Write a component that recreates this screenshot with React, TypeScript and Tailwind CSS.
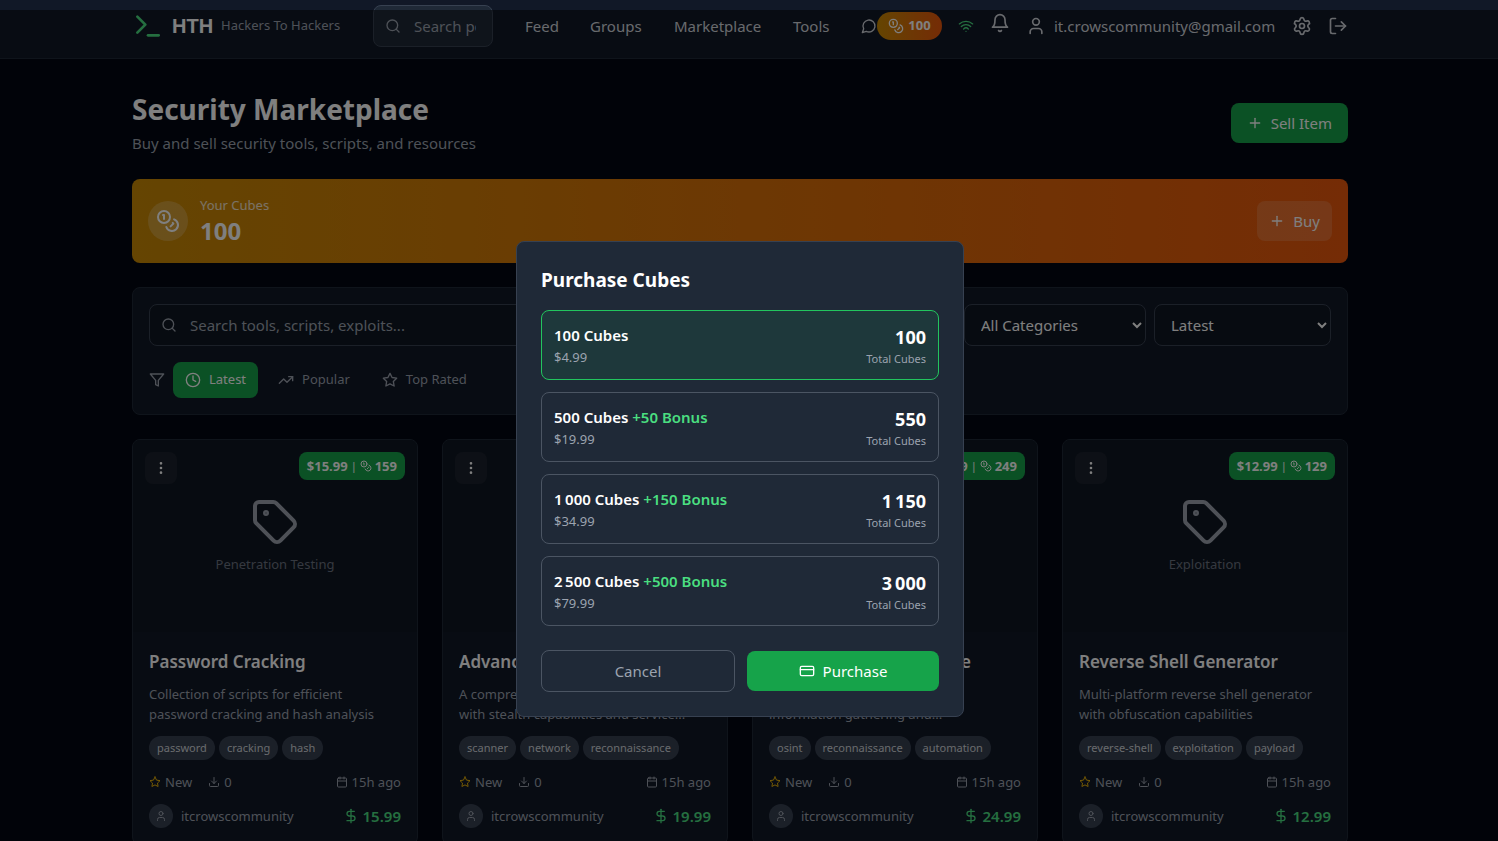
import React, { useState } from "react";
import {
  Calendar,
  Clock,
  Coins,
  CreditCard,
  DollarSign,
  Download,
  EllipsisVertical,
  LogOut,
  Plus,
  Search,
  Settings,
  Tag,
  TrendingUp,
  User,
  Wifi,
} from "lucide-react";

type IconProps = { className?: string };

function Glyph({ className, children }: IconProps & { children: React.ReactNode }) {
  return (
    <svg
      viewBox="0 0 24 24"
      fill="none"
      stroke="currentColor"
      strokeWidth="2"
      strokeLinecap="round"
      strokeLinejoin="round"
      aria-hidden="true"
      className={className}
    >
      {children}
    </svg>
  );
}

const TerminalIcon = ({ className }: IconProps) => (
  <Glyph className={className}>
    <polyline points="4 17 10 11 4 5" />
    <line x1="12" x2="20" y1="19" y2="19" />
  </Glyph>
);

const MessageIcon = ({ className }: IconProps) => (
  <Glyph className={className}>
    <path d="M7.9 20A9 9 0 1 0 4 16.1L2 22Z" />
  </Glyph>
);

const BellIcon = ({ className }: IconProps) => (
  <Glyph className={className}>
    <path d="M6 8a6 6 0 0 1 12 0c0 7 3 9 3 9H3s3-2 3-9" />
    <path d="M10.3 21a1.94 1.94 0 0 0 3.4 0" />
  </Glyph>
);

const FilterIcon = ({ className }: IconProps) => (
  <Glyph className={className}>
    <polygon points="22 3 2 3 10 12.46 10 19 14 21 14 12.46 22 3" />
  </Glyph>
);

const StarIcon = ({ className }: IconProps) => (
  <Glyph className={className}>
    <polygon points="12 2 15.09 8.26 22 9.27 17 14.14 18.18 21.02 12 17.77 5.82 21.02 7 14.14 2 9.27 8.91 8.26 12 2" />
  </Glyph>
);

type Product = {
  title: string;
  category: string;
  description: string;
  tags: string[];
  price: string;
  cubes: number;
};

const products: Product[] = [
  {
    title: "Password Cracking",
    category: "Penetration Testing",
    description: "Collection of scripts for efficient\npassword cracking and hash analysis",
    tags: ["password", "cracking", "hash"],
    price: "15.99",
    cubes: 159,
  },
  {
    title: "Advanced Port Scanner",
    category: "Network Security",
    description: "A comprehensive network scanner\nwith stealth capabilities and service...",
    tags: ["scanner", "network", "reconnaissance"],
    price: "19.99",
    cubes: 199,
  },
  {
    title: "OSINT Automation Suite",
    category: "Reconnaissance",
    description: "Automated toolkit for OSINT\ninformation gathering and...",
    tags: ["osint", "reconnaissance", "automation"],
    price: "24.99",
    cubes: 249,
  },
  {
    title: "Reverse Shell Generator",
    category: "Exploitation",
    description: "Multi-platform reverse shell generator\nwith obfuscation capabilities",
    tags: ["reverse-shell", "exploitation", "payload"],
    price: "12.99",
    cubes: 129,
  },
];

const packs = [
  { amount: "100", bonus: "", price: "$4.99", total: "100" },
  { amount: "500", bonus: "+50 Bonus", price: "$19.99", total: "550" },
  { amount: "1\u202f000", bonus: "+150 Bonus", price: "$34.99", total: "1\u202f150" },
  { amount: "2\u202f500", bonus: "+500 Bonus", price: "$79.99", total: "3\u202f000" },
];

function Header() {
  return (
    <header className="border-b border-[#1f2937] bg-[#111827] pt-[5px] pr-[18px] pb-[11px] text-[15px] text-[#d1d5db]">
      <div className="mx-auto flex max-w-7xl items-center justify-between px-8">
        <div className="flex items-center gap-8">
          <a href="#home" className="flex w-[209px] items-center gap-2 whitespace-nowrap">
            <TerminalIcon className="size-8 shrink-0 text-[#4ade80]" />
            <span className="font-['Liberation_Sans',sans-serif] text-xl font-bold text-white">HTH</span>
            <span className="text-[13px] text-[#9ca3af]">Hackers To Hackers</span>
          </a>
          <div className="relative w-[120px]">
            <Search className="absolute top-[13px] left-3 size-4 text-[#9ca3af]" />
            <input
              type="text"
              aria-label="Search posts"
              placeholder="Search posts, groups"
              className="h-[42px] w-full rounded-lg border border-[#374151] bg-[#1f2937] pr-4 pl-10 text-white placeholder-[#9ca3af]"
            />
          </div>
          <nav className="flex gap-8 whitespace-nowrap">
            <a href="#feed" className="w-[33px]">Feed</a>
            <a href="#groups" className="w-[52px]">Groups</a>
            <a href="#marketplace" className="w-[87px]">Marketplace</a>
            <a href="#tools" className="w-9">Tools</a>
          </nav>
        </div>
        <div className="flex items-center gap-4">
          <div className="flex items-center">
            <button type="button" aria-label="Messages">
              <MessageIcon className="size-4" />
            </button>
            <button
              type="button"
              className="flex h-7 w-[65px] items-center justify-center gap-1 rounded-full bg-linear-to-r/srgb from-[#ca8a04] to-[#ea580c] text-[13px] font-bold text-white"
            >
              <Coins className="size-4" />
              100
            </button>
          </div>
          <Wifi className="size-4 text-[#4ade80]" />
          <button type="button" aria-label="Notifications" className="pb-[6px]">
            <BellIcon className="size-5" />
          </button>
          <a href="#profile" className="flex w-[250px] items-center gap-2">
            <User className="size-5 shrink-0" />
            it.crowscommunity@gmail.com
          </a>
          <button type="button" aria-label="Settings">
            <Settings className="size-5" />
          </button>
          <button type="button" aria-label="Log out">
            <LogOut className="size-5" />
          </button>
        </div>
      </div>
    </header>
  );
}

function Filters() {
  return (
    <section className="rounded-lg border border-[#1f2937] bg-[#111827] p-4">
      <div className="flex gap-2">
        <div className="relative flex-1">
          <Search className="absolute top-[13px] left-3 size-4 text-[#9ca3af]" />
          <input
            type="text"
            aria-label="Search tools"
            placeholder="Search tools, scripts, exploits..."
            className="h-[42px] w-full rounded-lg border border-[#374151] bg-[#0f1722] pr-4 pl-10 text-white placeholder-[#9ca3af]"
          />
        </div>
        <select
          aria-label="Category"
          className="h-[42px] w-[182px] rounded-lg border border-[#374151] bg-[#0f1722] px-3 text-white"
        >
          <option>All Categories</option>
        </select>
        <select
          aria-label="Sort order"
          className="h-[42px] w-[177px] rounded-lg border border-[#374151] bg-[#0f1722] px-3 text-white"
        >
          <option>Latest</option>
        </select>
      </div>
      <div className="mt-4 flex items-center gap-2 text-[13px] text-[#9ca3af]">
        <FilterIcon className="size-4" />
        <button type="button" className="flex h-9 items-center gap-2 rounded-lg bg-[#16a34a] px-3 text-white">
          <Clock className="size-4" />
          Latest
        </button>
        <button type="button" className="flex h-9 items-center gap-2 rounded-lg px-3">
          <TrendingUp className="size-4" />
          Popular
        </button>
        <button type="button" className="flex h-9 items-center gap-2 rounded-lg px-3">
          <StarIcon className="size-4" />
          Top Rated
        </button>
      </div>
    </section>
  );
}

function ProductCard({ product }: { product: Product }) {
  return (
    <article className="min-w-0 overflow-hidden rounded-lg border border-[#1f2937] bg-[#111827] text-[13px] leading-5 text-[#9ca3af]">
      <div className="relative flex h-48 flex-col items-center justify-center gap-2 bg-[#0f1722]">
        <Tag className="size-12" />
        <span className="text-[#6b7280]">{product.category}</span>
        <button
          type="button"
          aria-label="Item options"
          className="absolute top-3 left-3 flex size-8 items-center justify-center rounded-lg bg-[#1b212d] text-white"
        >
          <EllipsisVertical className="size-4" />
        </button>
        <div className="absolute top-3 right-3 flex h-7 items-center gap-[3px] rounded-lg bg-[#16a34a] px-2 font-bold whitespace-nowrap text-white">
          <span>${product.price}</span>
          <span className="text-[11px] font-normal">|</span>
          <Coins className="size-3" />
          <span>{product.cubes}</span>
        </div>
      </div>
      <div className="p-4">
        <h2 className="truncate text-[17px] leading-7 font-semibold text-white">{product.title}</h2>
        <p className="mt-2 whitespace-pre-line">{product.description}</p>
        <ul className="mt-3 flex gap-1 text-[11px] leading-4 text-[#d1d5db]">
          {product.tags.map((tag) => (
            <li key={tag} className="rounded-full bg-[#374151] px-2 py-1 whitespace-nowrap">
              {tag}
            </li>
          ))}
        </ul>
        <div className="mt-3 flex items-center gap-4">
          <span className="flex items-center gap-1">
            <StarIcon className="size-3 text-[#eab308]" />
            New
          </span>
          <span className="flex items-center gap-1">
            <Download className="size-3" />0
          </span>
          <span className="ml-auto flex items-center gap-1">
            <Calendar className="size-3" />
            15h ago
          </span>
        </div>
        <div className="mt-3 flex items-center gap-2">
          <span className="flex size-6 items-center justify-center rounded-full bg-[#374151]">
            <User className="size-3" />
          </span>
          <span>itcrowscommunity</span>
          <span className="ml-auto flex items-center gap-1 text-[15px] font-semibold text-[#4ade80]">
            <DollarSign className="size-4" />
            {product.price}
          </span>
        </div>
      </div>
    </article>
  );
}

function PurchaseDialog() {
  const [selected, setSelected] = useState(0);
  return (
    <div className="fixed inset-x-0 top-[10px] bottom-0 flex items-center justify-center bg-black/50 pt-[107px] pr-[18px]">
      <div
        role="dialog"
        aria-modal="true"
        aria-labelledby="purchase-title"
        className="w-full max-w-md rounded-lg border border-[#374151] bg-[#1f2937] p-6"
      >
        <h2 id="purchase-title" className="text-[19px] leading-7 font-bold text-white">
          Purchase Cubes
        </h2>
        <div className="mt-4 flex flex-col gap-3">
          {packs.map((pack, index) => (
            <button
              key={pack.total}
              type="button"
              aria-pressed={selected === index}
              onClick={() => setSelected(index)}
              className={
                selected === index
                  ? "flex items-center justify-between rounded-lg border border-[#22c55e] bg-[#22c55e]/10 p-3"
                  : "flex items-center justify-between rounded-lg border border-[#4b5563] p-3"
              }
            >
              <span className="flex flex-col text-left">
                <span className="leading-6 font-semibold text-white">
                  {pack.amount} Cubes{" "}
                  {pack.bonus && <span className="text-[#4ade80]">{pack.bonus}</span>}
                </span>
                <span className="text-[13px] leading-5 text-[#9ca3af]">{pack.price}</span>
              </span>
              <span className="flex flex-col text-right">
                <span className="text-lg leading-7 font-bold text-white">{pack.total}</span>
                <span className="text-[11px] leading-4 text-[#9ca3af]">Total Cubes</span>
              </span>
            </button>
          ))}
        </div>
        <div className="mt-6 flex items-center gap-3">
          <button
            type="button"
            className="flex-1 rounded-lg border border-[#4b5563] px-4 py-2 leading-6 text-[#9ca3af]"
          >
            Cancel
          </button>
          <button
            type="button"
            className="flex flex-1 items-center justify-center gap-2 rounded-lg bg-[#16a34a] px-4 py-2 leading-6 text-white"
          >
            <CreditCard className="size-4" />
            Purchase
          </button>
        </div>
      </div>
    </div>
  );
}

export default function App() {
  return (
    <div className="min-h-screen bg-[#030712] font-['Noto_Sans',sans-serif] text-[15px]">
      <Header />
      <div className="pr-[18px]">
        <main className="mx-auto flex max-w-7xl flex-col gap-6 p-8">
          <div className="flex items-center justify-between">
            <div>
              <h1 className="text-[28px] leading-9 font-bold text-white">Security Marketplace</h1>
              <p className="mt-1 leading-6 text-[#9ca3af]">
                Buy and sell security tools, scripts, and resources
              </p>
            </div>
            <button
              type="button"
              className="flex h-10 items-center gap-2 rounded-lg bg-[#16a34a] px-4 text-white"
            >
              <Plus className="size-4" />
              Sell Item
            </button>
          </div>

          <section className="flex items-center justify-between rounded-lg bg-linear-to-r/srgb from-[#ca8a04] to-[#ea580c] p-4 text-white">
            <div className="flex items-center gap-3">
              <span className="flex size-10 items-center justify-center rounded-full bg-white/20">
                <Coins className="size-6" />
              </span>
              <div>
                <p className="text-[13px] leading-5 text-white/80">Your Cubes</p>
                <p className="text-2xl leading-8 font-bold">100</p>
              </div>
            </div>
            <button type="button" className="flex h-10 items-center gap-2 rounded-lg bg-white/15 px-3">
              <Plus className="size-4" />
              Buy
            </button>
          </section>

          <Filters />

          <section className="grid grid-cols-4 gap-6">
            {products.map((product) => (
              <ProductCard key={product.title} product={product} />
            ))}
          </section>
        </main>
      </div>
      <PurchaseDialog />
    </div>
  );
}
